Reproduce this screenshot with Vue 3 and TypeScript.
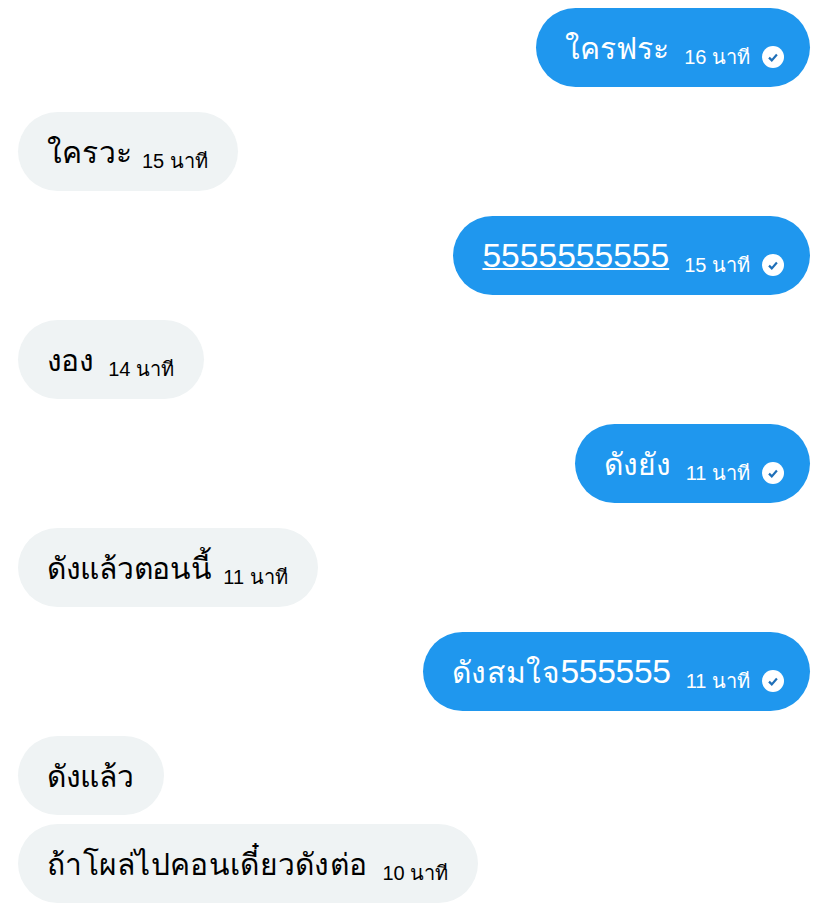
<script setup lang="ts">
interface Msg { thai?: string; digits?: string; time?: string; mine: boolean; link?: boolean; tight?: boolean; spacing?: number; digitSpacing?: number; timeGap?: number }
const messages: Msg[] = [
  { thai: 'ใครฟระ', time: '16 นาที', mine: true },
  { thai: 'ใครวะ', time: '15 นาที', mine: false, spacing: 0.2, timeGap: 10 },
  { digits: '5555555555', time: '15 นาที', mine: true, link: true },
  { thai: 'งอง', time: '14 นาที', mine: false, spacing: -0.6 },
  { thai: 'ดังยัง', time: '11 นาที', mine: true },
  { thai: 'ดังแล้วตอนนี้', time: '11 นาที', mine: false, spacing: -0.3, timeGap: 12 },
  { thai: 'ดังสมใจ', digits: '555555', time: '11 นาที', mine: true, spacing: 0.6, digitSpacing: -0.3 },
  { thai: 'ดังแล้ว', mine: false, tight: true, spacing: -0.3 },
  { thai: 'ถ้าโผล่ไปคอนเดี๋ยวดังต่อ', time: '10 นาที', mine: false, spacing: 0.3 },
]
</script>

<template>
  <div class="chat">
    <div
      v-for="(m, i) in messages"
      :key="i"
      class="bubble"
      :class="{ mine: m.mine, tight: m.tight }"
    >
      <span class="text">
        <span v-if="m.thai" class="thai" :style="{ letterSpacing: (m.spacing ?? 0) + 'px' }">{{ m.thai }}</span>
        <span v-if="m.digits" class="digits" :class="{ link: m.link }" :style="{ letterSpacing: (m.digitSpacing ?? 0) + 'px' }">{{ m.digits }}</span>
      </span>
      <span v-if="m.time" class="time" :style="{ marginLeft: (m.timeGap ?? 15) + 'px' }">{{ m.time }}</span>
      <svg v-if="m.mine" class="check" viewBox="0 0 22 22" width="22" height="22">
        <circle cx="11" cy="11" r="11" fill="#fff" />
        <path d="M7 11.6l2.8 2.8 5.1-5.8" fill="none" stroke="#1f6fb8" stroke-width="2.2" />
      </svg>
    </div>
  </div>
</template>

<style>
body { background: #fff; }
</style>

<style scoped>
.chat {
  width: 828px;
  height: 920px;
  box-sizing: border-box;
  padding: 8px 18px 0;
  display: flex;
  flex-direction: column;
  align-items: flex-start;
  gap: 25px;
  overflow: hidden;
  font-family: "Liberation Sans", sans-serif;
}
.bubble {
  height: 79px;
  box-sizing: border-box;
  padding: 0 30px 0 29px;
  display: flex;
  align-items: center;
  border-radius: 40px;
  background: #eff3f4;
  color: #000;
}
.bubble.tight { margin-bottom: -16px; }
.bubble.mine {
  align-self: flex-end;
  background: #1f97ee;
  color: #fff;
  padding: 0 26px 0 29px;
}
.text {
  line-height: 44px;
  white-space: nowrap;
  margin-top: 7px;
}
.thai { font-size: 30px; }
.digits { font-size: 33.6px; }
.link { text-decoration: underline; text-decoration-thickness: 2px; }
.time {
  font-size: 20px;
  line-height: 28px;
  margin-top: 18px;
}
.check { margin: 18px 0 0 12px; flex: none; }
</style>
